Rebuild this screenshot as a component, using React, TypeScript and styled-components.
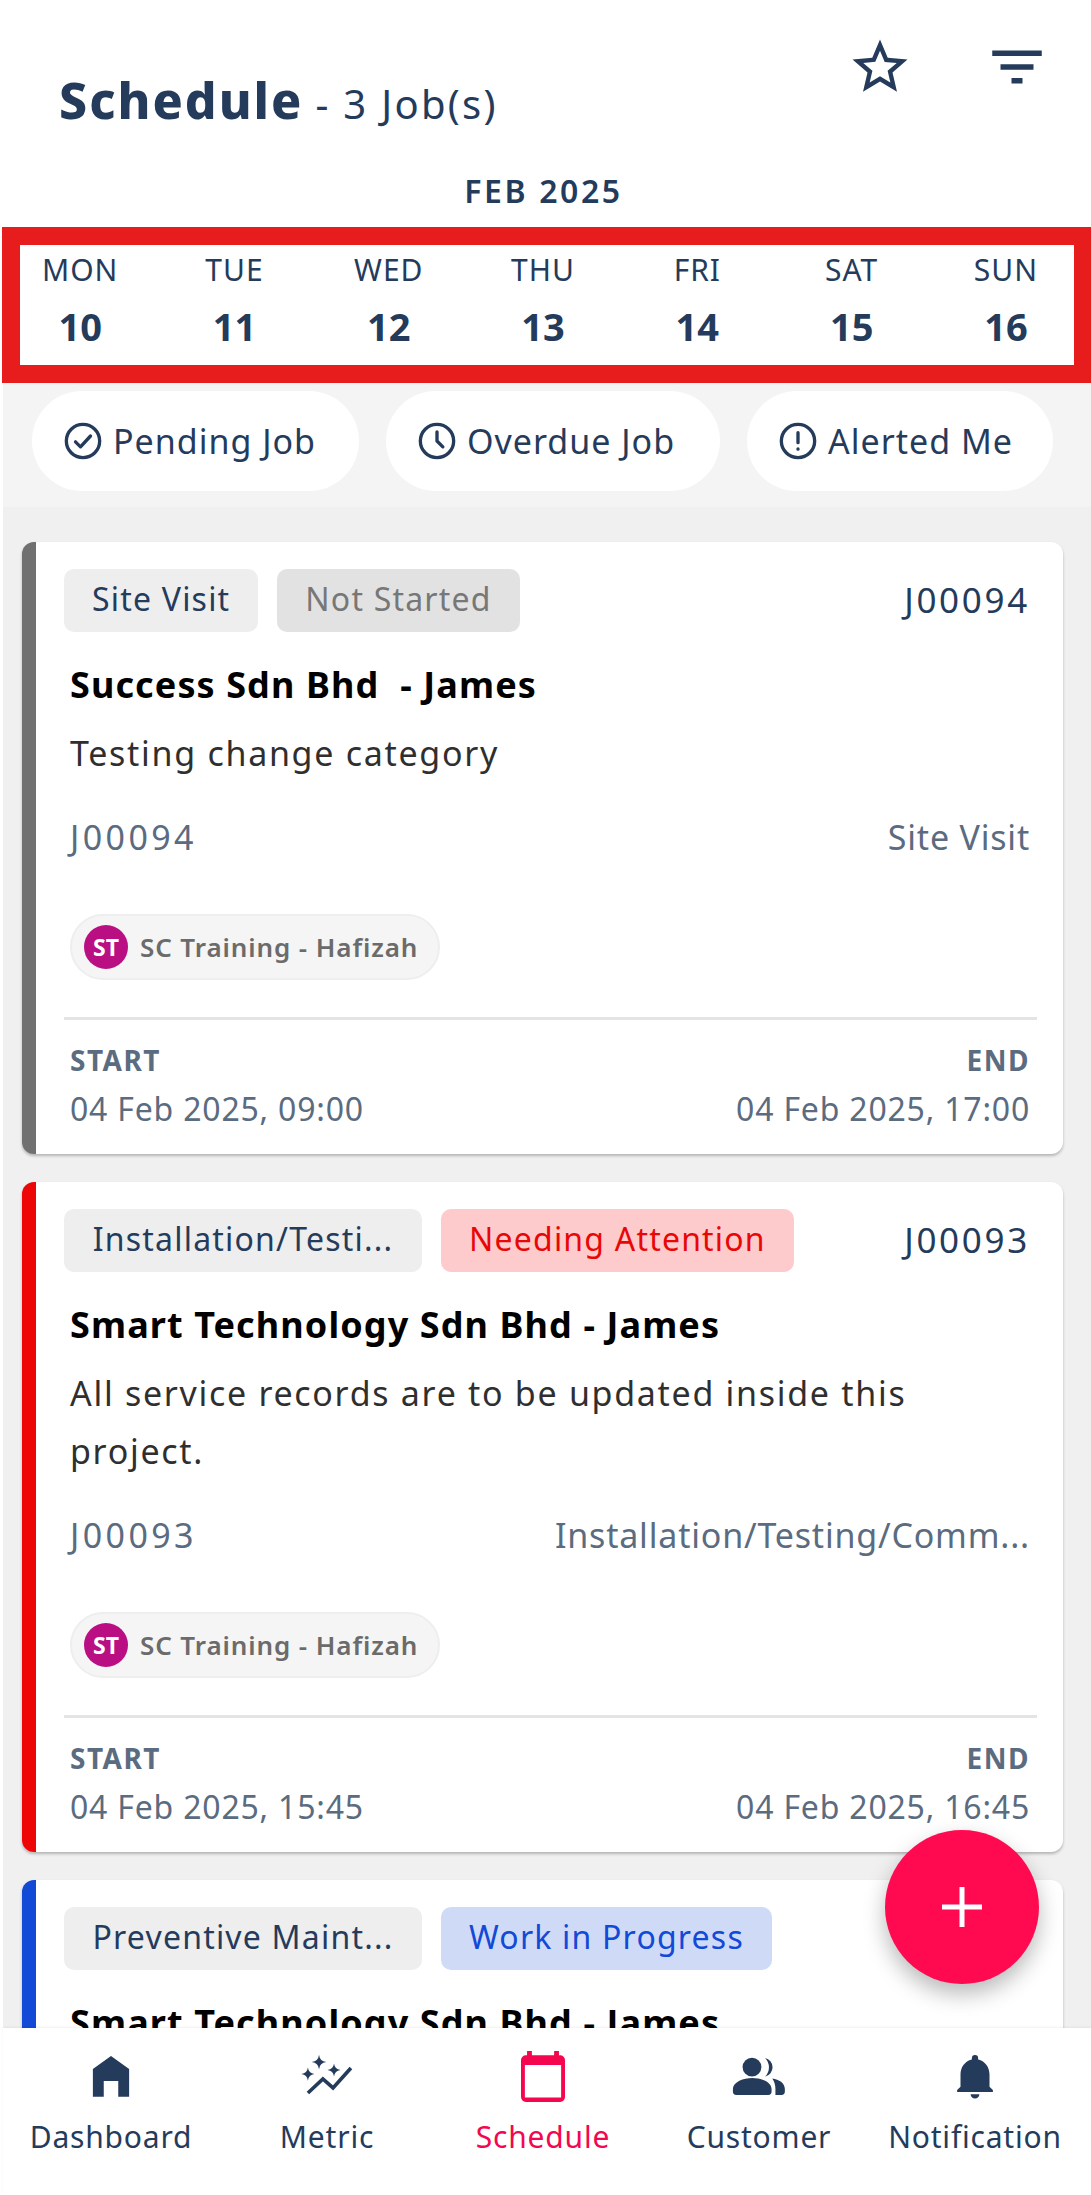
import React from "react";
import styled, { createGlobalStyle } from "styled-components";

const Global = createGlobalStyle`
  html, body { margin: 0; padding: 0; background: #fff; }
  * { box-sizing: border-box; }
  body { font-family: "Noto Sans", "Open Sans", sans-serif; color: #253b5b; }
`;

const Page = styled.div`
  position: relative;
  width: 1091px;
  height: 2195px;
  overflow: hidden;
  display: flex;
  flex-direction: column;
  background: #fff;
`;
const Header = styled.header`
  height: 170px;
  padding: 34px 41px 0 59px;
  display: flex;
  justify-content: space-between;
`;
const TitleWrap = styled.div`
  padding-top: 36px;
  display: flex;
  align-items: baseline;
  gap: 12px;
  height: 100px;
`;
const Title = styled.h1`
  margin: 0;
  font-size: 50px;
  line-height: 60px;
  font-weight: 800;
  letter-spacing: 2px;
`;
const Count = styled.span`
  font-size: 40px;
  letter-spacing: 2.3px;
`;
const HeaderIcons = styled.div`
  display: flex;
  gap: 71px;
`;
const Month = styled.div`
  height: 57px;
  text-align: center;
  font-size: 32px;
  line-height: 42px;
  font-weight: 600;
  letter-spacing: 2.6px;
  padding-right: 4px;
`;
const Week = styled.div`
  margin-left: 2px;
  height: 156px;
  border: 18px solid #e71d1d;
  border-right-width: 17px;
  overflow: hidden;
  background: #fff;
`;
const WeekGrid = styled.div`
  width: 1081px;
  margin-left: -17px;
  padding-top: 3px;
  display: grid;
  grid-template-columns: repeat(7, 154.3px);
`;
const Day = styled.div`
  display: flex;
  flex-direction: column;
  align-items: center;
`;
const DayName = styled.div`
  font-size: 30px;
  line-height: 44px;
  letter-spacing: 1px;
`;
const DayNum = styled.div`
  margin-top: 5px;
  font-size: 38px;
  line-height: 58px;
  font-weight: 700;
`;
const Filters = styled.div`
  margin-left: 3px;
  height: 124px;
  padding: 8px 0 0 29px;
  background: #f4f4f4;
  display: flex;
  gap: 27px;
`;
const Chip = styled.div<{ $w: number }>`
  width: ${(p) => p.$w}px;
  height: 100px;
  border-radius: 50px;
  background: #fff;
  display: flex;
  align-items: center;
  padding-left: 31px;
  gap: 10px;
  font-size: 34px;
  letter-spacing: 1px;
`;
const List = styled.main`
  flex: 1;
  min-height: 0;
  margin-left: 3px;
  overflow: hidden;
  background: #f0f0f0;
  padding: 35px 28px 0 19px;
  display: flex;
  flex-direction: column;
  gap: 28px;
`;
const Card = styled.article<{ $color: string; $h: number }>`
  flex: none;
  height: ${(p) => p.$h}px;
  background: #fff;
  border-left: 14px solid ${(p) => p.$color};
  border-radius: 12px;
  box-shadow: 0 2px 3px rgba(0, 0, 0, 0.25);
  padding: 27px 33px 0 28px;
`;
const TopRow = styled.div`
  display: flex;
  align-items: center;
  gap: 19px;
  height: 63px;
`;
const Tag = styled.span<{ $bg: string; $fg: string; $w?: number }>`
  height: 63px;
  border-radius: 10px;
  background: ${(p) => p.$bg};
  color: ${(p) => p.$fg};
  display: inline-flex;
  align-items: center;
  justify-content: center;
  padding: 0 28px 4px;
  font-size: 32px;
  letter-spacing: 1.2px;
  white-space: nowrap;
  ${(p) => (p.$w ? `width: ${p.$w}px;` : "")}
`;
const JobNo = styled.span`
  margin-left: auto;
  padding-bottom: 3px;
  font-size: 35px;
  letter-spacing: 2.7px;
`;
const Body = styled.div`
  padding-left: 6px;
`;
const Customer = styled.div`
  margin-top: 31px;
  font-size: 36px;
  line-height: 44px;
  font-weight: 700;
  letter-spacing: 1.1px;
  color: #000;
  white-space: pre;
`;
const Desc = styled.div`
  margin-top: 17px;
  font-size: 34px;
  line-height: 58px;
  letter-spacing: 1.7px;
  color: #2f2f2f;
`;
const MetaRow = styled.div`
  margin-top: 30px;
  display: flex;
  justify-content: space-between;
  font-size: 34px;
  line-height: 50px;
  letter-spacing: 0.8px;
  color: #5b6b80;
  white-space: nowrap;
`;
const MetaNo = styled.span`
  letter-spacing: 3.4px;
`;
const Assignee = styled.div`
  margin-top: 52px;
  width: 370px;
  height: 66px;
  border-radius: 33px;
  border: 2px solid #eeeeee;
  background: #f5f5f5;
  display: flex;
  align-items: center;
  padding-left: 12px;
  gap: 12px;
  font-size: 26px;
  font-weight: 600;
  letter-spacing: 0.9px;
  color: #6b6b6b;
`;
const Avatar = styled.span`
  width: 44px;
  height: 44px;
  border-radius: 50%;
  background: #b90f83;
  color: #fff;
  display: flex;
  align-items: center;
  justify-content: center;
  font-size: 23px;
  font-weight: 700;
  letter-spacing: 0;
`;
const Divider = styled.hr`
  margin: 37px -7px 0 0;
  border: 0;
  height: 3px;
  background: #e4e4e4;
`;
const TimeRow = styled.div`
  margin-top: 20px;
  padding-left: 6px;
  display: flex;
  justify-content: space-between;
`;
const TimeCol = styled.div<{ $right?: boolean }>`
  text-align: ${(p) => (p.$right ? "right" : "left")};
`;
const TimeLabel = styled.div`
  font-size: 28px;
  line-height: 40px;
  font-weight: 700;
  letter-spacing: 1.5px;
  color: #5b6b80;
`;
const TimeValue = styled.div`
  margin-top: 6px;
  font-size: 32px;
  line-height: 46px;
  letter-spacing: 0.8px;
  color: #5b6b80;
`;
const Nav = styled.nav`
  flex: none;
  height: 167px;
  margin-left: 3px;
  background: #fff;
  display: grid;
  grid-template-columns: repeat(5, 216px);
  box-shadow: 0 -1px 2px rgba(0, 0, 0, 0.06);
  position: relative;
`;
const NavItem = styled.div<{ $active?: boolean }>`
  display: flex;
  flex-direction: column;
  align-items: center;
  padding-top: 20px;
  color: ${(p) => (p.$active ? "#f4074f" : "#253b5b")};
`;
const NavIcon = styled.svg`
  width: 58px;
  height: 58px;
  fill: currentColor;
`;
const NavLabel = styled.span`
  margin-top: 11px;
  font-size: 30px;
  line-height: 40px;
  letter-spacing: 0.8px;
`;
const Fab = styled.button`
  position: absolute;
  left: 885px;
  top: 1830px;
  width: 154px;
  height: 154px;
  border: 0;
  border-radius: 50%;
  background: #ff0a50;
  box-shadow: 0 10px 22px rgba(0, 0, 0, 0.28);
  display: flex;
  align-items: center;
  justify-content: center;
  padding: 0;
`;
const Ic = styled.svg<{ $s: number }>`
  width: ${(p) => p.$s}px;
  height: ${(p) => p.$s}px;
  flex: none;
  fill: #253b5b;
`;
const Stroke = styled.svg`
  width: 40px;
  height: 40px;
  flex: none;
  fill: none;
  stroke: #253b5b;
  stroke-width: 2;
  stroke-linecap: round;
  stroke-linejoin: round;
`;

const days: [string, number][] = [["MON",10],["TUE",11],["WED",12],["THU",13],["FRI",14],["SAT",15],["SUN",16]];

type Job = {
  h: number; color: string; cat: string; catW?: number; status: string; sbg: string; sfg: string; no?: string;
  customer: string; desc: string; meta: string; start: string; end: string;
};
const jobs: Job[] = [
  { h: 612, color: "#707070", cat: "Site Visit", status: "Not Started", sbg: "#e2e2e2", sfg: "#777777", no: "J00094",
    customer: "Success Sdn Bhd  - James", desc: "Testing change category", meta: "Site Visit", start: "04 Feb 2025, 09:00", end: "04 Feb 2025, 17:00" },
  { h: 670, color: "#ee0606", cat: "Installation/Testi...", catW: 358, status: "Needing Attention", sbg: "#fdcbcb", sfg: "#e80707", no: "J00093",
    customer: "Smart Technology Sdn Bhd - James", desc: "All service records are to be updated inside this project.", meta: "Installation/Testing/Comm...", start: "04 Feb 2025, 15:45", end: "04 Feb 2025, 16:45" },
  { h: 670, color: "#1249d6", cat: "Preventive Maint...", catW: 358, status: "Work in Progress", sbg: "#cfdbf6", sfg: "#1249d6",
    customer: "Smart Technology Sdn Bhd - James", desc: "", meta: "", start: "", end: "" },
];

export default function App() {
  return (
    <Page>
      <Global />
      <Header>
        <TitleWrap>
          <Title>Schedule</Title>
          <Count>- 3 Job(s)</Count>
        </TitleWrap>
        <HeaderIcons>
          <Ic $s={66} viewBox="0 0 24 24"><path d="M22 9.24l-7.19-.62L12 2 9.19 8.63 2 9.24l5.46 4.73L5.82 21 12 17.27 18.18 21l-1.63-7.03L22 9.24zM12 15.4l-3.76 2.27 1-4.28-3.32-2.88 4.38-.38L12 6.1l1.71 4.04 4.38.38-3.32 2.88 1 4.28L12 15.4z" /></Ic>
          <Ic $s={66} viewBox="0 0 24 24"><path d="M10 18h4v-2h-4v2zM3 6v2h18V6H3zm3 7h12v-2H6v2z" /></Ic>
        </HeaderIcons>
      </Header>
      <Month>FEB 2025</Month>
      <Week>
        <WeekGrid>
          {days.map(([d, n]) => (
            <Day key={d}><DayName>{d}</DayName><DayNum>{n}</DayNum></Day>
          ))}
        </WeekGrid>
      </Week>
      <Filters>
        <Chip $w={327}>
          <Stroke viewBox="0 0 24 24"><circle cx="12" cy="12" r="10" /><path d="M7.5 12.5l3 3 6-6.5" /></Stroke>
          Pending Job
        </Chip>
        <Chip $w={334}>
          <Stroke viewBox="0 0 24 24"><circle cx="12" cy="12" r="10" /><path d="M12 6.5V12l3.5 3.5" /></Stroke>
          Overdue Job
        </Chip>
        <Chip $w={306}>
          <Stroke viewBox="0 0 24 24"><circle cx="12" cy="12" r="10" /><path d="M12 7v6M12 16.8v.1" /></Stroke>
          Alerted Me
        </Chip>
      </Filters>
      <List>
        {jobs.map((j, i) => (
          <Card key={i} $color={j.color} $h={j.h}>
            <TopRow>
              <Tag $bg="#eeeeee" $fg="#253b5b" $w={j.catW}>{j.cat}</Tag>
              <Tag $bg={j.sbg} $fg={j.sfg}>{j.status}</Tag>
              {j.no && <JobNo>{j.no}</JobNo>}
            </TopRow>
            <Body>
              <Customer>{j.customer}</Customer>
              {j.desc && <Desc>{j.desc}</Desc>}
              {j.no && (
                <>
                  <MetaRow><MetaNo>{j.no}</MetaNo><span>{j.meta}</span></MetaRow>
                  <Assignee><Avatar>ST</Avatar>SC Training - Hafizah</Assignee>
                </>
              )}
            </Body>
            {j.no && (
              <>
                <Divider />
                <TimeRow>
                  <TimeCol><TimeLabel>START</TimeLabel><TimeValue>{j.start}</TimeValue></TimeCol>
                  <TimeCol $right><TimeLabel>END</TimeLabel><TimeValue>{j.end}</TimeValue></TimeCol>
                </TimeRow>
              </>
            )}
          </Card>
        ))}
      </List>
      <Nav>
        <NavItem>
          <NavIcon viewBox="0 0 24 24"><path d="M12 3.3l7.500 5.400V20.200H15V13.700H9V20.200H4.500V8.700z" /></NavIcon>
          <NavLabel>Dashboard</NavLabel>
        </NavItem>
        <NavItem>
          <NavIcon viewBox="0 0 24 24">
            <path d="M8.700 2.800Q9 5.500 11.700 5.800 9 6.100 8.700 8.800 8.400 6.100 5.700 5.800 8.400 5.500 8.700 2.800zM4.100 8.100Q4.400 10.500 6.800 10.800 4.400 11.100 4.100 13.500 3.800 11.100 1.400 10.800 3.800 10.500 4.100 8.100zM14.900 6.400Q15.200 8.800 17.600 9.100 15.200 9.400 14.900 11.800 14.600 9.400 12.200 9.100 14.600 8.800 14.900 6.400z" />
            <path d="M4.100 18.600l6.200-5.800 4.200 3.700 7.400-8.200" fill="none" stroke="currentColor" strokeWidth="1.500" />
          </NavIcon>
          <NavLabel>Metric</NavLabel>
        </NavItem>
        <NavItem $active>
          <NavIcon viewBox="0 0 24 24"><path fillRule="evenodd" d="M5.400 1.200h2v1.800h9.200V1.200h2V3h.5a2 2 0 0 1 2 2v15.300a2 2 0 0 1-2 2H4.900a2 2 0 0 1-2-2V5a2 2 0 0 1 2-2h.5zM4.500 7v13.500h15V7z" /></NavIcon>
          <NavLabel>Schedule</NavLabel>
        </NavItem>
        <NavItem>
          <NavIcon viewBox="0 0 24 24">
            <circle cx="9.100" cy="7.900" r="3.900" />
            <path d="M1.200 17c0-3 4.500-4.600 8-4.600s8 1.600 8 4.600v1a1.400 1.400 0 0 1-1.400 1.400H2.600A1.400 1.400 0 0 1 1.200 18zM14.500 4.100a4 4 0 0 1 0 7.800 5.500 5.500 0 0 0 0-7.800zM17.500 12.600c2.800.4 5.200 1.800 5.200 4.400v1a1.400 1.400 0 0 1-1.400 1.400h-2.500V17c0-1.800-.5-3.200-1.300-4.400z" />
          </NavIcon>
          <NavLabel>Customer</NavLabel>
        </NavItem>
        <NavItem>
          <NavIcon viewBox="0 0 24 24"><path d="M12 2.900a1.300 1.300 0 0 1 1.300 1.300v.6c3 .7 4.700 3.300 4.700 6.200v5l1.400 1.400v.8H4.600v-.8L6 16v-5c0-2.900 1.700-5.500 4.700-6.200v-.6A1.300 1.300 0 0 1 12 2.900zM10.200 19.100h3.600a1.800 1.800 0 0 1-3.600 0z" /></NavIcon>
          <NavLabel>Notification</NavLabel>
        </NavItem>
      </Nav>
      <Fab aria-label="Add">
        <svg width="44" height="44" viewBox="0 0 44 44"><path d="M22 2v40M2 22h40" stroke="#fff" strokeWidth="5" /></svg>
      </Fab>
    </Page>
  );
}
